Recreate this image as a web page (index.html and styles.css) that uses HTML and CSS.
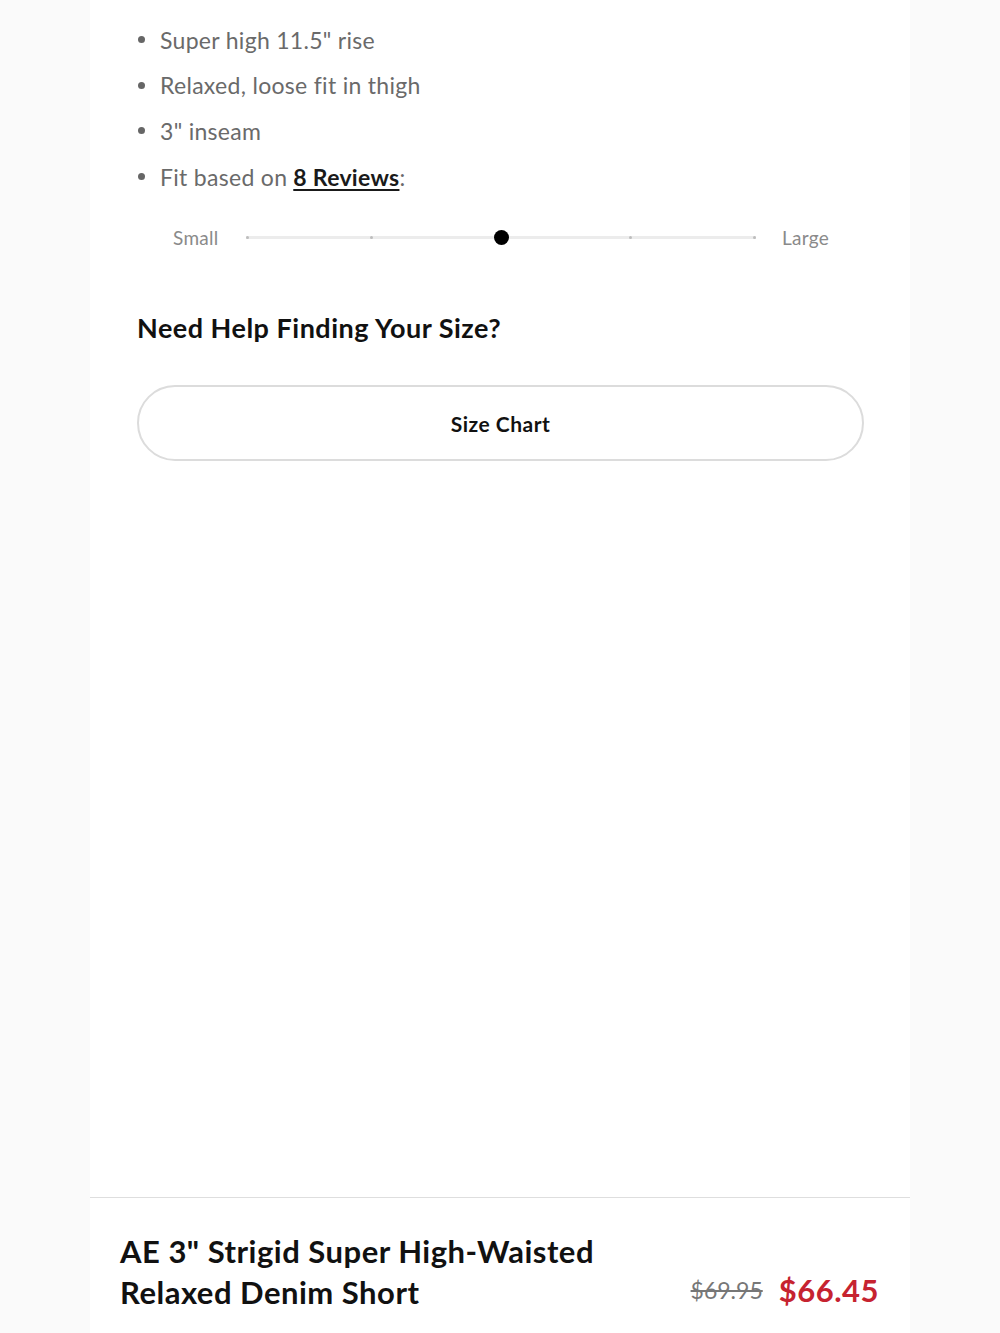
FILE: index.html
```html
<!DOCTYPE html>
<html>
<head>
  <meta charset="UTF-8">
  <meta name="viewport" content="width=device-width, initial-scale=1.0">
  <link rel="stylesheet" href="styles.css">
  <title>AE 3" Strigid Super High-Waisted Relaxed Denim Short</title>
</head>
<body>
  <div class="page">
    <div class="details">
      <ul class="features">
        <li>Super high 11.5" rise</li>
        <li>Relaxed, loose fit in thigh</li>
        <li>3" inseam</li>
        <li>Fit based on <a href="#reviews" class="reviews">8 Reviews</a>:</li>
      </ul>

      <div class="fit">
        <span class="fit-label">Small</span>
        <div class="fit-track">
          <span class="tick"></span>
          <span class="tick"></span>
          <span class="tick active"></span>
          <span class="tick"></span>
          <span class="tick"></span>
        </div>
        <span class="fit-label">Large</span>
      </div>

      <h2 class="help">Need Help Finding Your Size?</h2>
      <button class="size-chart">Size Chart</button>
    </div>

    <div class="product-bar">
      <h1 class="product-name">AE 3" Strigid Super High-Waisted<br>Relaxed Denim Short</h1>
      <div class="prices">
        <span class="price-old">$69.95</span>
        <span class="price-now">$66.45</span>
      </div>
    </div>
  </div>
</body>
</html>
```

FILE: styles.css
```css
body {
  margin: 0;
  background-color: #fafafa;
  font-family: Lato, "Open Sans", sans-serif;
}

.page {
  width: 820px;
  min-height: 1333px;
  margin: 0 auto;
  background: #fff;
  display: flex;
  flex-direction: column;
}

.details {
  padding: 17px 47px 0 47px;
}

.features {
  list-style: none;
  margin: 0;
  padding: 0;
}

.features li {
  display: flex;
  align-items: center;
  height: 45.6px;
  font-size: 23px;
  color: #6a6a6a;
  letter-spacing: 0.3px;
}

.features li::before {
  content: "";
  width: 7px;
  height: 7px;
  border-radius: 50%;
  background: #666;
  margin: 0 15px 0 1px;
  flex-shrink: 0;
}

.reviews {
  color: #1a1a1a;
  font-weight: 700;
  text-decoration: underline;
  text-underline-offset: 3px;
  margin-left: 6px;
}

.fit {
  display: flex;
  align-items: center;
  margin: 23px 0 0 36px;
  width: 656px;
  height: 30px;
}

.fit-label {
  font-size: 19px;
  color: #8a8a8a;
  width: 47px;
  letter-spacing: 0.3px;
}

.fit-track {
  flex: 1;
  margin: 0 26px;
  height: 3px;
  background: #ececec;
  display: flex;
  justify-content: space-between;
  align-items: center;
}

.tick {
  width: 3px;
  height: 3px;
  border-radius: 50%;
  background: #bdbdbd;
}

.tick.active {
  width: 15px;
  height: 15px;
  background: #000;
}

.help {
  margin: 60px 0 0 0;
  font-size: 27px;
  font-weight: 700;
  color: #111;
  line-height: 32px;
  letter-spacing: 0.5px;
}

.size-chart {
  display: block;
  width: 727px;
  height: 76px;
  margin-top: 41px;
  border: 2px solid #dcdcdc;
  border-radius: 38px;
  background: #fff;
  font-family: inherit;
  font-size: 21px;
  font-weight: 700;
  color: #111;
  letter-spacing: 0.5px;
  cursor: pointer;
}

.product-bar {
  margin-top: auto;
  height: 136px;
  border-top: 1px solid #dedede;
  box-sizing: border-box;
  padding: 33px 31px 0 30px;
  display: flex;
  justify-content: space-between;
  align-items: flex-end;
}

.product-name {
  margin: 0;
  font-size: 31px;
  font-weight: 700;
  line-height: 41px;
  color: #111;
  letter-spacing: 0.5px;
  align-self: flex-start;
}

.prices {
  display: flex;
  align-items: center;
  gap: 16px;
  margin-bottom: 24px;
}

.price-old {
  font-size: 23px;
  color: #777;
  text-decoration: line-through;
}

.price-now {
  font-size: 31px;
  font-weight: 700;
  color: #c62330;
  letter-spacing: 0.5px;
}
```
